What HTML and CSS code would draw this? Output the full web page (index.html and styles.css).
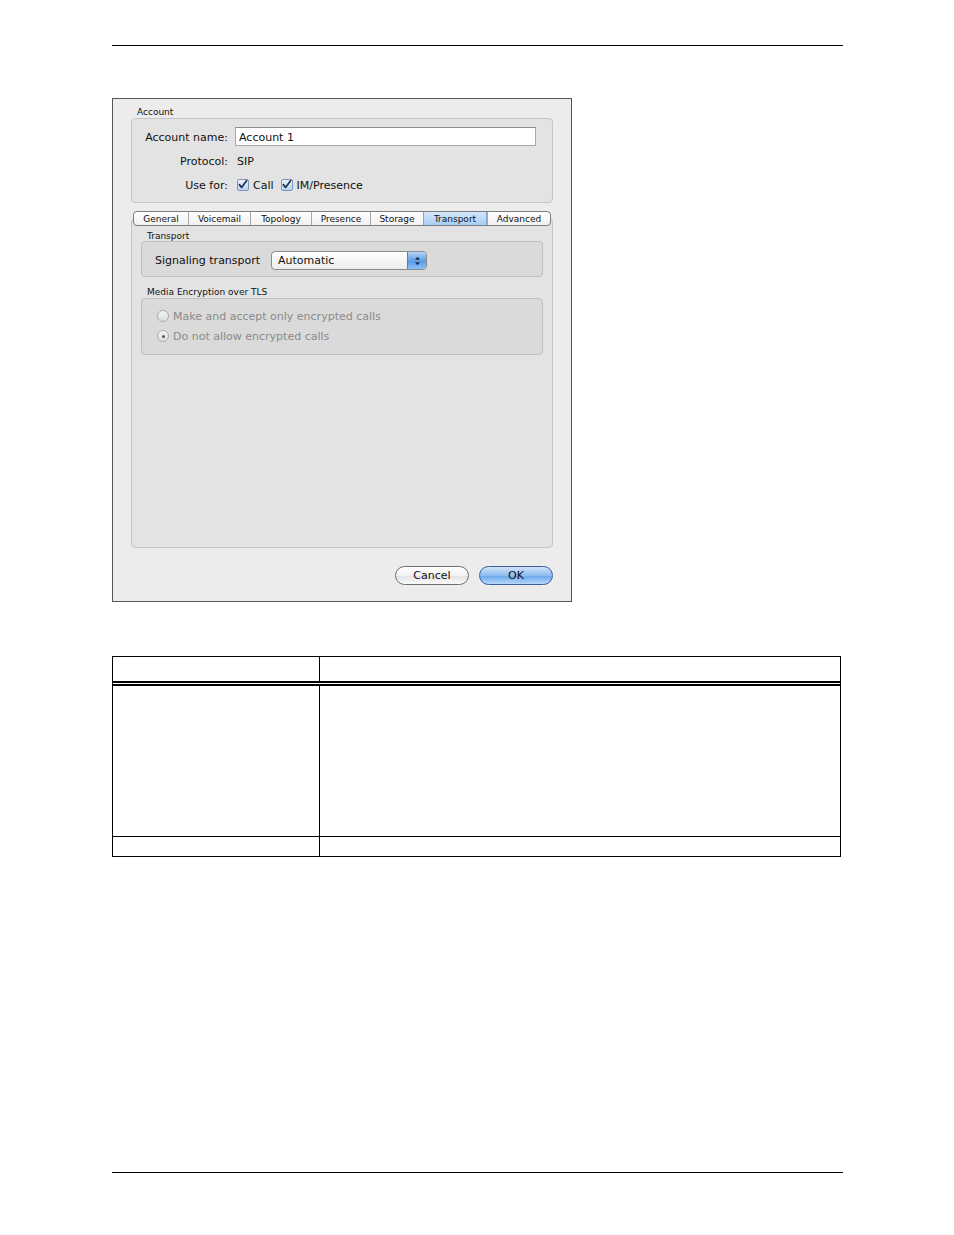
FILE: index.html
```html
<!DOCTYPE html>
<html>
<head>
<meta charset="utf-8">
<link rel="stylesheet" href="styles.css">
</head>
<body>
<div class="page">
  <div class="rule"></div>

  <div class="dialog">
    <div class="sec-label">Account</div>
    <div class="account-box">
      <div class="form-grid">
        <div class="lbl">Account name:</div>
        <div class="val"><div class="textfield">Account 1</div></div>
        <div class="lbl">Protocol:</div>
        <div class="val sip">SIP</div>
        <div class="lbl">Use for:</div>
        <div class="val checks">
          <span class="check"><svg width="12" height="12" viewBox="0 0 12 12"><path d="M2.6 5.6 L5 8.6 L10.6 1.2" fill="none" stroke="#1d2d55" stroke-width="1.8" stroke-linecap="round" stroke-linejoin="round"/></svg></span>
          <span class="ctext">Call</span>
          <span class="check"><svg width="12" height="12" viewBox="0 0 12 12"><path d="M2.6 5.6 L5 8.6 L10.6 1.2" fill="none" stroke="#1d2d55" stroke-width="1.8" stroke-linecap="round" stroke-linejoin="round"/></svg></span>
          <span class="ctext">IM/Presence</span>
        </div>
      </div>
    </div>

    <div class="tabs">
      <div class="tab t1">General</div>
      <div class="tab t2">Voicemail</div>
      <div class="tab t3">Topology</div>
      <div class="tab t4">Presence</div>
      <div class="tab t5">Storage</div>
      <div class="tab t6 sel">Transport</div>
      <div class="tab t7">Advanced</div>
    </div>
    <div class="tab-box">
      <div class="sub-label">Transport</div>
      <div class="group g1">
        <span class="sig-label">Signaling transport</span>
        <div class="popup">
          <span class="popup-text">Automatic</span>
          <span class="popup-arrows">
            <svg width="7" height="10" viewBox="0 0 7 10"><path d="M3.5 0.8 L6 3.8 L1 3.8 Z" fill="#1a2a4a"/><path d="M3.5 9.2 L6 6.2 L1 6.2 Z" fill="#1a2a4a"/></svg>
          </span>
        </div>
      </div>
      <div class="sub-label second">Media Encryption over TLS</div>
      <div class="group g2">
        <div class="radio-row"><span class="radio"></span><span class="rtext">Make and accept only encrypted calls</span></div>
        <div class="radio-row"><span class="radio on"><span class="dot"></span></span><span class="rtext">Do not allow encrypted calls</span></div>
      </div>
    </div>

    <div class="buttons">
      <div class="btn cancel">Cancel</div>
      <div class="btn ok">OK</div>
    </div>
  </div>

  <div class="table">
    <div class="row head"><div class="cell"></div><div class="cell"></div></div>
    <div class="row body"><div class="cell"></div><div class="cell"></div></div>
    <div class="row last"><div class="cell"></div><div class="cell"></div></div>
  </div>

  <div class="rule bottom"></div>
</div>
</body>
</html>
```

FILE: styles.css
```css
html, body {
  margin: 0;
  padding: 0;
  background: #fff;
}
body {
  font-family: "DejaVu Sans", "Liberation Sans", sans-serif;
  color: #000;
}
.page {
  padding: 45px 0 0 112px;
  width: 842px;
}
.rule {
  width: 731px;
  border-top: 1px solid #000;
}
.rule.bottom {
  margin-top: 315px;
}

/* dialog */
.dialog {
  box-sizing: border-box;
  margin-top: 52px;
  width: 460px;
  height: 504px;
  border: 1px solid #555;
  background: #ececec;
  padding: 6px 18px 0 18px;
  display: flex;
  flex-direction: column;
}
.sec-label {
  font-size: 9px;
  line-height: 14px;
  height: 12px;
  padding-left: 6px;
  margin-bottom: 1px;
  color: #111;
}
.account-box {
  box-sizing: border-box;
  height: 85px;
  border: 1px solid #c6c6c6;
  border-radius: 4px;
  background: #e3e3e3;
  padding: 8px 0 0 0;
}
.form-grid {
  display: grid;
  grid-template-columns: 96px 1fr;
  grid-template-rows: 19px 18px 18px;
  row-gap: 6px;
  column-gap: 9px;
  font-size: 11px;
}
.lbl {
  text-align: right;
  display: flex;
  align-items: center;
  justify-content: flex-end;
  padding-top: 1px;
  color: #111;
}
.val {
  display: flex;
  align-items: center;
  color: #111;
}
.val.sip, .ctext {
  padding-top: 1px;
}
.textfield {
  box-sizing: border-box;
  margin-left: -2px;
  width: 301px;
  height: 19px;
  background: #fff;
  border: 1px solid #a8a8a8;
  border-top-color: #8c8c8c;
  padding-left: 3px;
  line-height: 19px;
  font-size: 11px;
}
.checks {
  gap: 0;
}
.check {
  box-sizing: border-box;
  width: 12px;
  height: 12px;
  border: 1px solid #7f95b8;
  border-radius: 2px;
  background: linear-gradient(#e9f1fb, #b9d2f0);
  display: inline-flex;
}
.check svg {
  margin: -1px 0 0 -1px;
}
.ctext {
  margin-left: 4px;
  margin-right: 7px;
}

/* tabs */
.tabs {
  position: relative;
  z-index: 1;
  margin: 8px 2px 0 2px;
  height: 15px;
  box-sizing: border-box;
  display: flex;
  border: 1px solid #7c7c7c;
  border-radius: 4px;
  background: linear-gradient(#ffffff, #f1f1f1);
  overflow: hidden;
}
.tab {
  flex: none;
  box-sizing: border-box;
  font-size: 9px;
  line-height: 15px;
  text-align: center;
  color: #111;
  border-left: 1px solid #a9a9a9;
}
.tab.t1 { width: 54px; border-left: none; }
.tab.t2 { width: 62px; }
.tab.t3 { width: 61px; }
.tab.t4 { width: 59px; }
.tab.t5 { width: 53px; }
.tab.t6 { width: 64px; }
.tab.t7 { width: 63px; }
.tab.sel {
  background: linear-gradient(#d5e7fb, #a8cdf5);
  border-left-color: #86a7d2;
  border-right: 1px solid #86a7d2;
}
.tab-box {
  box-sizing: border-box;
  margin-top: -8px;
  height: 330px;
  border: 1px solid #c6c6c6;
  border-radius: 4px;
  background: #e3e3e3;
  padding: 12px 9px 0 9px;
}
.sub-label {
  font-size: 9px;
  line-height: 11px;
  height: 10px;
  padding-left: 6px;
  color: #111;
}
.sub-label.second {
  margin-top: 10px;
  margin-bottom: 1px;
}
.group {
  box-sizing: border-box;
  border: 1px solid #c0c0c0;
  border-radius: 4px;
  background: #dadada;
}
.g1 {
  height: 36px;
  padding: 9px 0 0 13px;
  display: flex;
  align-items: flex-start;
}
.sig-label {
  width: 116px;
  font-size: 11px;
  line-height: 20px;
  color: #111;
}
.popup {
  box-sizing: border-box;
  width: 156px;
  height: 19px;
  border: 1px solid #8a8a8a;
  border-radius: 4px;
  background: linear-gradient(#ffffff, #ececec);
  display: flex;
  overflow: hidden;
}
.popup-text {
  flex: 1;
  font-size: 11px;
  line-height: 18px;
  padding-left: 6px;
  color: #111;
}
.popup-arrows {
  width: 18px;
  border-left: 1px solid #5a7fb5;
  background: linear-gradient(#b4d3f6, #5b9ce8 55%, #8cc0f5);
  display: flex;
  align-items: center;
  justify-content: center;
}
.g2 {
  height: 57px;
  padding: 10px 0 0 15px;
  display: flex;
  flex-direction: column;
  gap: 6px;
}
.radio-row {
  height: 14px;
  display: flex;
  align-items: center;
}
.radio {
  box-sizing: border-box;
  width: 12px;
  height: 12px;
  border: 1px solid #acacac;
  border-radius: 50%;
  background: linear-gradient(#f4f4f4, #dedede);
  display: inline-flex;
  align-items: center;
  justify-content: center;
}
.dot {
  width: 3px;
  height: 3px;
  border-radius: 50%;
  background: #555;
}
.rtext {
  margin-left: 4px;
  padding-top: 1px;
  font-size: 11px;
  color: #8a8a8a;
}

/* buttons */
.buttons {
  margin-top: 18px;
  display: flex;
  justify-content: flex-end;
  gap: 10px;
}
.btn {
  box-sizing: border-box;
  width: 74px;
  height: 19px;
  border-radius: 10px;
  font-size: 11px;
  line-height: 18px;
  text-align: center;
  color: #111;
}
.btn.cancel {
  border: 1px solid #6f6f6f;
  background: linear-gradient(#ffffff, #f2f2f2 50%, #e2e2e2 51%, #fbfbfb);
}
.btn.ok {
  border: 1px solid #3d5f9c;
  background: linear-gradient(#cfe3fa, #8cbcf1 50%, #67a5ec 51%, #b6d8fb);
}

/* table */
.table {
  margin-top: 54px;
  width: 729px;
  box-sizing: border-box;
  border: 1px solid #000;
}
.row {
  display: grid;
  grid-template-columns: 206px 1fr;
}
.cell + .cell {
  border-left: 1px solid #000;
}
.row.head {
  height: 29px;
  box-sizing: border-box;
  border-bottom: 5px double #000;
}
.row.body {
  height: 151px;
  box-sizing: border-box;
  border-bottom: 1px solid #000;
}
.row.last {
  height: 19px;
}
```
